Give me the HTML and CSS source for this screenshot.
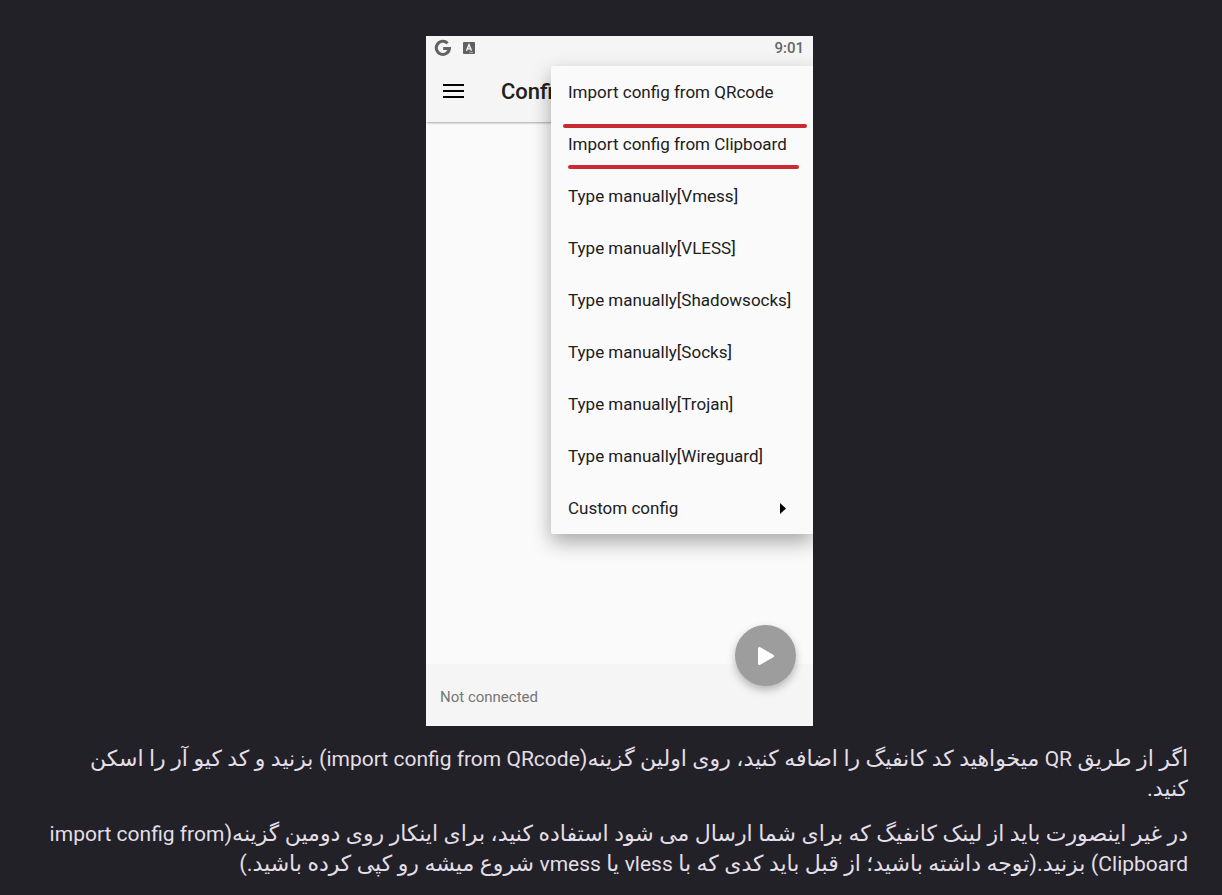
FILE: index.html
```html
<!DOCTYPE html>
<html lang="fa" dir="rtl">
<head>
<meta charset="utf-8">
<meta name="viewport" content="width=device-width, initial-scale=1">
<title>Import config</title>
<link rel="stylesheet" href="styles.css">
</head>
<body>
<main class="article">
  <div class="figure">
  <section class="phone" lang="en" dir="ltr">
    <div class="status">
      <svg class="google" viewBox="0 0 18 18" aria-hidden="true"><path d="M13.6 4.2A6.6 6.6 0 1 0 15.5 9.4H9.2" fill="none" stroke="#626262" stroke-width="3"/></svg>
      <svg class="letter" viewBox="0 0 12 12" aria-hidden="true"><rect width="12" height="12" rx="1" fill="#606060"/><path d="M3.5 8.8 6 2.7l2.5 6.1M4.4 6.9h3.2" fill="none" stroke="#f5f5f5" stroke-width="1.4"/><path d="M6 10.6h4" stroke="#aaa" stroke-width="1"/></svg>
      <span class="time">9:01</span>
    </div>
    <header class="toolbar">
      <button class="menu-button" type="button" aria-label="Menu"><svg viewBox="0 0 21 14" aria-hidden="true"><path d="M0 1h21M0 7h21M0 13h21" stroke="#000" stroke-width="2"/></svg></button>
      <h1 class="title">Config</h1>
    </header>
    <div class="content"></div>
    <footer class="footer">Not connected</footer>
    <button class="connect" type="button" aria-label="Connect"><svg viewBox="0 0 18 20" aria-hidden="true"><path d="M2.5 2.5v15L15.5 10Z" fill="#fff" stroke="#fff" stroke-width="3" stroke-linejoin="round"/></svg></button>
    <div class="menu">
      <button class="item" type="button">Import config from QRcode</button>
      <button class="item" type="button">Import config from Clipboard</button>
      <button class="item" type="button">Type manually[Vmess]</button>
      <button class="item" type="button">Type manually[VLESS]</button>
      <button class="item" type="button">Type manually[Shadowsocks]</button>
      <button class="item" type="button">Type manually[Socks]</button>
      <button class="item" type="button">Type manually[Trojan]</button>
      <button class="item" type="button">Type manually[Wireguard]</button>
      <button class="item" type="button">Custom config<svg class="arrow" viewBox="0 0 6 11" aria-hidden="true"><path d="M0 0 6 5.5 0 11Z" fill="#000"/></svg></button>
      <span class="mark mark-top"></span>
      <span class="mark mark-bottom"></span>
    </div>
  </section>
  </div>
  <p class="text">اگر از طریق <span class="latin">QR</span> میخواهید کد کانفیگ را اضافه کنید، روی اولین گزینه(<span class="latin">import config from QRcode</span>) بزنید و کد کیو آر را اسکن<br>کنید.</p>
  <p class="text">در غیر اینصورت باید از لینک کانفیگ که برای شما ارسال می شود استفاده کنید، برای اینکار روی دومین گزینه(<span class="latin">import config from<br>Clipboard</span>) بزنید.(توجه داشته باشید؛ از قبل باید کدی که با <span class="latin">vless</span> یا <span class="latin">vmess</span> شروع میشه رو کپی کرده باشید.)</p>
</main>
</body>
</html>
```
FILE: styles.css
```css
* { box-sizing: border-box; }
body {
  margin: 0;
  background: #222127;
  color: #e2dfe8;
  font-family: Roboto, "DejaVu Sans", sans-serif;
}
button {
  border: 0;
  padding: 0;
  background: none;
  color: inherit;
  font: inherit;
}
svg { display: block; }
.article { padding: 36px 34px 0; }
.figure {
  display: flex;
  justify-content: center;
  padding-left: 17px;
  margin-bottom: 18px;
}
.phone {
  position: relative;
  display: flex;
  flex-direction: column;
  width: 387px;
  min-height: 690px;
  overflow: hidden;
  background: #fafafa;
  color: #202020;
}
.status {
  display: flex;
  align-items: center;
  gap: 11px;
  height: 24px;
  padding: 0 9px 0 8px;
  background: #f5f5f5;
}
.google { width: 18px; height: 18px; }
.letter { width: 12px; height: 12px; }
.time {
  margin-left: auto;
  color: #666;
  font-size: 15px;
  font-weight: 500;
}
.toolbar {
  display: flex;
  align-items: center;
  gap: 37px;
  height: 62px;
  padding: 0 17px;
  background: #f5f5f5;
  box-shadow: 0 2px 2px -1px #0005;
}
.menu-button svg { width: 21px; height: 14px; }
.title { margin: 0; font-size: 22px; font-weight: 500; }
.content { flex: 1; }
.footer {
  padding: 20px 14px 16px;
  background: #f5f5f5;
  color: #757575;
  font-size: 15px;
  line-height: 26px;
}
.connect {
  position: absolute;
  right: 17px;
  bottom: 40px;
  display: grid;
  place-items: center;
  width: 61px;
  height: 61px;
  border-radius: 50%;
  background: #9d9d9d;
  box-shadow: 0 4px 8px #0004;
}
.connect svg { width: 18px; height: 20px; }
.menu {
  position: absolute;
  top: 30px;
  right: 0;
  width: 262px;
  border-radius: 2px 0 0 2px;
  background: #fafafa;
  box-shadow: 0 8px 20px #0005;
}
.item {
  display: flex;
  align-items: center;
  justify-content: space-between;
  width: 100%;
  height: 52px;
  padding: 0 27px 0 17px;
  font-size: 17px;
  white-space: nowrap;
}
.arrow { width: 6px; height: 11px; }
.mark {
  position: absolute;
  height: 4px;
  border-radius: 2px;
  background: #ca2a31;
}
.mark-top { top: 58px; left: 12px; right: 6px; }
.mark-bottom { top: 99px; left: 17px; right: 14px; }
.text {
  margin: 0 0 15px;
  font-size: 22px;
  line-height: 30px;
}
.latin { font-size: 21px; line-height: 20px; }
```
